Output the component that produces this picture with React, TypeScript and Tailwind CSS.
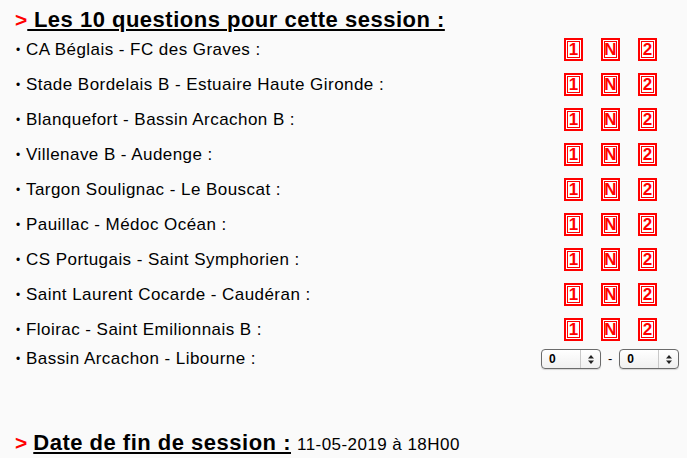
import React from "react";

const matches = [
  "CA Béglais - FC des Graves :",
  "Stade Bordelais B - Estuaire Haute Gironde :",
  "Blanquefort - Bassin Arcachon B :",
  "Villenave B - Audenge :",
  "Targon Soulignac - Le Bouscat :",
  "Pauillac - Médoc Océan :",
  "CS Portugais - Saint Symphorien :",
  "Saint Laurent Cocarde - Caudéran :",
  "Floirac - Saint Emilionnais B :",
];

function Box({ label }: { label: string }) {
  return (
    <div className="w-[19px] h-[23px] border-2 border-[#ff0000] bg-white p-px">
      <div className="w-full h-full border border-[#ff0000] flex items-center justify-center text-[#ff0000] font-bold text-[17px] leading-none">
        {label}
      </div>
    </div>
  );
}

function Select() {
  return (
    <div className="w-[60px] h-[20px] rounded-[4px] border border-[#6b6b6b] bg-gradient-to-b from-white to-[#f0f0f0] shadow-[0_1px_1px_rgba(0,0,0,0.15)] flex items-stretch">
      <div className="flex-1 flex items-center pl-[7px] text-[12px] font-bold text-black leading-none">0</div>
      <div className="w-[20px] border-l border-[#c8c8c8] flex items-center justify-center">
        <svg width="8" height="11" viewBox="0 0 8 11">
          <path d="M1 4.5 L4 1 L7 4.5 Z" fill="#222" />
          <path d="M1 6.5 L4 10 L7 6.5 Z" fill="#222" />
        </svg>
      </div>
    </div>
  );
}

function Label({ text }: { text: string }) {
  return (
    <div className="flex-1 pl-[16px] flex items-center">
      <span className="w-[10px] text-[12px] leading-none">•</span>
      <span className="text-[17px] tracking-[0.45px]">{text}</span>
    </div>
  );
}

export default function App() {
  return (
    <div
      className="w-[687px] h-[458px] bg-[#fafafa] text-black overflow-hidden"
      style={{ fontFamily: '"Liberation Sans", Arial, sans-serif' }}
    >
      <div className="pl-[15px] pt-[8px] h-[32px] flex items-start">
        <span className="text-[#ff0000] font-bold text-[21px] leading-[24px]">&gt;</span>
        <span className="font-bold text-[22px] leading-[24px] tracking-[0.5px] underline underline-offset-[2px] decoration-[2px]">
          &nbsp;Les 10 questions pour cette session :
        </span>
      </div>
      <div className="flex flex-col">
        {matches.map((m) => (
          <div key={m} className="h-[35px] flex items-center">
            <Label text={m} />
            <div className="w-[147px] flex items-center pl-[24px] gap-[18px]">
              <Box label="1" />
              <Box label="N" />
              <Box label="2" />
            </div>
          </div>
        ))}
        <div className="h-[22px] flex items-center mt-px">
          <Label text="Bassin Arcachon - Libourne :" />
          <div className="w-[147px] flex items-center pl-[1px] gap-[7px]">
            <Select />
            <span className="text-[13px]">-</span>
            <Select />
          </div>
        </div>
      </div>
      <div className="pl-[15px] mt-[61px] h-[24px] flex items-baseline">
        <span className="text-[#ff0000] font-bold text-[21px] leading-[24px]">&gt;</span>
        <span className="ml-[6px] font-bold text-[22px] leading-[24px] tracking-[0.5px] underline underline-offset-[2px] decoration-[2px]">
          Date de fin de session :
        </span>
        <span className="ml-[6px] text-[17px] leading-[24px] tracking-[0.45px]">11-05-2019 à 18H00</span>
      </div>
    </div>
  );
}
